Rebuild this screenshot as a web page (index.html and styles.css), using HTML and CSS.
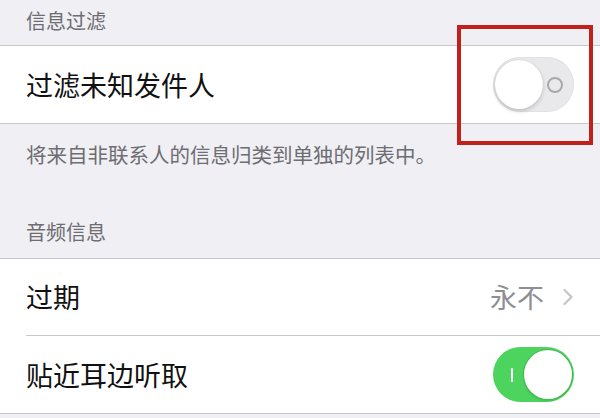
FILE: index.html
```html
<!DOCTYPE html>
<html lang="zh-CN">
<head>
<meta charset="utf-8">
<link rel="stylesheet" href="styles.css">
</head>
<body>
<div class="page">
  <div class="header header-first">信息过滤</div>
  <div class="group">
    <div class="row">
      <span class="label">过滤未知发件人</span>
      <div class="toggle toggle-off">
        <div class="knob"></div>
        <div class="off-mark"></div>
      </div>
    </div>
  </div>
  <div class="footer">将来自非联系人的信息归类到单独的列表中。</div>
  <div class="header header-second">音频信息</div>
  <div class="group">
    <div class="row row-sep">
      <span class="label">过期</span>
      <div class="detail">
        <span class="value">永不</span>
        <svg class="chevron" width="12" height="18" viewBox="0 0 12 18"><path d="M2.5 2 L9.5 9 L2.5 16" fill="none" stroke="#c7c7cc" stroke-width="2.4" stroke-linecap="round" stroke-linejoin="round"/></svg>
      </div>
    </div>
    <div class="row">
      <span class="label">贴近耳边听取</span>
      <div class="toggle toggle-on">
        <div class="on-mark"></div>
        <div class="knob"></div>
      </div>
    </div>
  </div>
  <div class="highlight"></div>
</div>
</body>
</html>
```
FILE: styles.css
```css
html, body {
  margin: 0;
  padding: 0;
  background: #efeff4;
}
.page {
  position: relative;
  width: 600px;
  height: 418px;
  overflow: hidden;
  font-family: "Noto Sans CJK SC", "Noto Sans", sans-serif;
  background: #efeff4;
}
.header {
  color: #6d6d72;
  font-size: 20px;
  padding-left: 26px;
  line-height: 30px;
}
.header-first {
  height: 45px;
  padding-top: 6px;
  box-sizing: border-box;
}
.header-second {
  height: 89px;
  padding-top: 48px;
  box-sizing: border-box;
}
.group {
  background: #ffffff;
  border-top: 1px solid #c8c7cc;
  border-bottom: 1px solid #c8c7cc;
}
.row {
  height: 77px;
  display: flex;
  align-items: center;
  padding: 0 26px;
  font-size: 27px;
  color: #111111;
  position: relative;
}
.row-sep {
  height: 76px;
  border-bottom: 1px solid #c8c7cc;
  margin-left: 26px;
  padding-left: 0;
}
.label {
  line-height: 34px;
}
.footer {
  color: #6d6d72;
  font-size: 20.5px;
  line-height: 30px;
  padding: 15px 26px 0;
  height: 45px;
  box-sizing: border-box;
  white-space: nowrap;
}
.detail {
  margin-left: auto;
  display: flex;
  align-items: center;
  gap: 18px;
}
.value {
  color: #8e8e93;
  font-size: 27px;
  line-height: 34px;
}
.chevron {
  display: block;
  margin-right: 0;
}
.toggle {
  margin-left: auto;
  width: 81px;
  height: 55px;
  border-radius: 28px;
  box-sizing: border-box;
  display: flex;
  align-items: center;
  padding: 0 2px;
}
.toggle-off {
  background: #e9e9eb;
  box-shadow: inset 0 0 0 1px #e2e2e4;
}
.toggle-on {
  background: #4cd45e;
}
.knob {
  width: 48px;
  height: 49px;
  border-radius: 50%;
  background: #ffffff;
  box-shadow: 0 2px 4px rgba(0,0,0,0.18), 0 0 1px rgba(0,0,0,0.15);
  flex: none;
}
.toggle-on .knob {
  margin-left: auto;
  box-shadow: 0 0 0 1px #3fb850, 0 2px 3px rgba(0,0,0,0.12);
}
.off-mark {
  margin-left: auto;
  margin-right: 9px;
  width: 12px;
  height: 12px;
  border: 2px solid #a9a9ab;
  border-radius: 50%;
}
.on-mark {
  width: 2px;
  height: 14px;
  background: #ffffff;
  margin-left: 16px;
  border-radius: 1px;
}
.highlight {
  position: absolute;
  left: 457px;
  top: 25px;
  width: 136px;
  height: 120px;
  box-sizing: border-box;
  border: 4px solid #c2201a;
}
```
